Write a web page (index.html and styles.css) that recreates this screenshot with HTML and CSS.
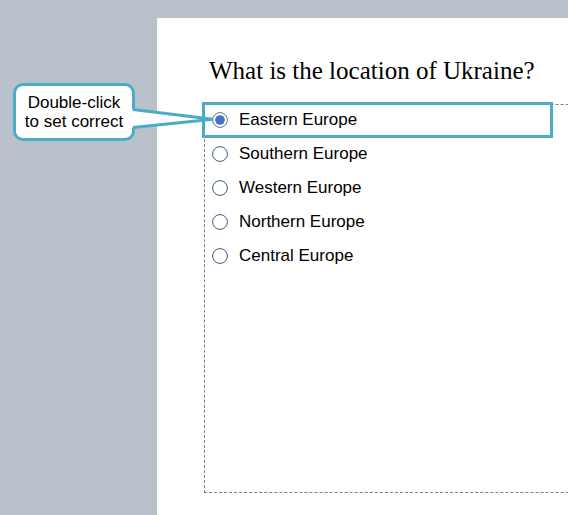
FILE: index.html
```html
<!DOCTYPE html>
<html>
<head>
<meta charset="utf-8">
<link rel="stylesheet" href="styles.css">
</head>
<body>
<div class="stage">
  <div class="slide">
    <h1 class="question">What is the location of Ukraine?</h1>
    <div class="answers">
      <ul class="options">
        <li class="option">
          <svg class="radio" viewBox="0 0 16 16"><circle cx="8" cy="8" r="7.4" fill="#fff" stroke="#5b6f8f" stroke-width="1"/><circle cx="8" cy="8" r="4.8" fill="#4472c4"/></svg>
          <span>Eastern Europe</span>
          <span class="highlight"></span>
        </li>
        <li class="option">
          <svg class="radio" viewBox="0 0 16 16"><circle cx="8" cy="8" r="7.4" fill="#fff" stroke="#3f5b80" stroke-width="1"/></svg>
          <span>Southern Europe</span>
        </li>
        <li class="option">
          <svg class="radio" viewBox="0 0 16 16"><circle cx="8" cy="8" r="7.4" fill="#fff" stroke="#3f5b80" stroke-width="1"/></svg>
          <span>Western Europe</span>
        </li>
        <li class="option">
          <svg class="radio" viewBox="0 0 16 16"><circle cx="8" cy="8" r="7.4" fill="#fff" stroke="#3f5b80" stroke-width="1"/></svg>
          <span>Northern Europe</span>
        </li>
        <li class="option">
          <svg class="radio" viewBox="0 0 16 16"><circle cx="8" cy="8" r="7.4" fill="#fff" stroke="#3f5b80" stroke-width="1"/></svg>
          <span>Central Europe</span>
        </li>
      </ul>
    </div>
  </div>
  <div class="callout">Double-click<br>to set correct</div>
  <svg class="tail" viewBox="0 0 568 515">
    <polygon points="128,109.5 133,109.5 213,119.2 133,127.5 128,127.5" fill="#fff"/>
    <polyline points="133,109.5 213,119.2 133,127.5" fill="none" stroke="#4bacc6" stroke-width="3" stroke-linejoin="miter"/>
  </svg>
</div>
</body>
</html>
```
FILE: styles.css
```css
html, body {
  margin: 0;
  padding: 0;
}
body {
  background: #b9c1ca;
  width: 568px;
  height: 515px;
  overflow: hidden;
}
.stage {
  position: relative;
  width: 568px;
  height: 515px;
  padding-top: 18px;
  box-sizing: border-box;
}
.slide {
  margin-left: 157px;
  height: 497px;
  background: #fff;
  overflow: hidden;
  padding-top: 38px;
  box-sizing: border-box;
}
.question {
  margin: 0;
  padding-left: 52px;
  font-family: "Liberation Serif", "Times New Roman", serif;
  font-weight: normal;
  font-size: 25px;
  line-height: 30px;
  color: #000;
  white-space: nowrap;
}
.answers {
  margin-top: 18px;
  margin-left: 47px;
  width: 440px;
  height: 389px;
  box-sizing: border-box;
  border: 1px dashed #7f7f7f;
  padding-left: 7px;
  padding-top: 1px;
}
.options {
  margin: 0;
  padding: 0;
  list-style: none;
  display: flex;
  flex-direction: column;
  gap: 6px;
}
.option {
  position: relative;
  height: 28px;
  display: flex;
  align-items: center;
  gap: 11px;
  font-family: "Liberation Sans", Arial, sans-serif;
  font-size: 17px;
  color: #000;
}
.radio {
  width: 16px;
  height: 16px;
  flex: none;
}
.highlight {
  position: absolute;
  left: -10px;
  top: -4px;
  width: 351px;
  height: 36px;
  box-sizing: border-box;
  border: 3px solid #4bacc6;
}
.callout {
  position: absolute;
  left: 13px;
  top: 83px;
  width: 122px;
  height: 58px;
  box-sizing: border-box;
  border: 3px solid #4bacc6;
  border-radius: 10px;
  background: #fff;
  display: flex;
  align-items: center;
  justify-content: center;
  text-align: center;
  font-family: "Liberation Sans", Arial, sans-serif;
  font-size: 17px;
  line-height: 19px;
  color: #000;
}
.tail {
  position: absolute;
  left: 0;
  top: 0;
  width: 568px;
  height: 515px;
  pointer-events: none;
}
```
